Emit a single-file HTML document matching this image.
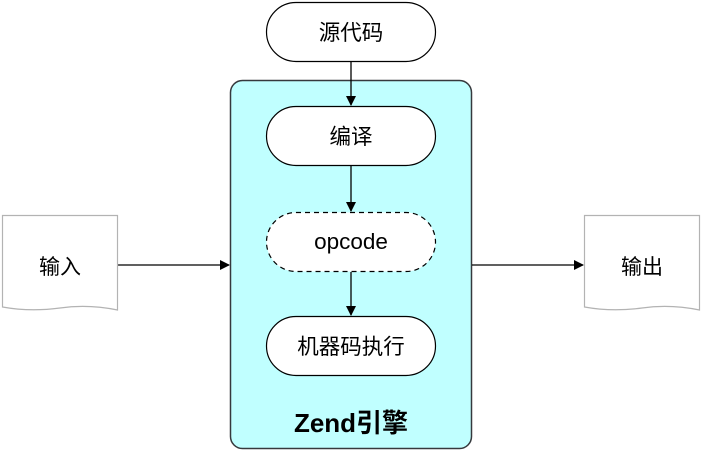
<!DOCTYPE html>
<html><head><meta charset="utf-8"><style>
html,body{margin:0;padding:0;background:#fff;}
svg{display:block;}
text{font-family:"Liberation Sans","Noto Sans CJK SC",sans-serif;fill:#000;}
</style></head><body>
<svg width="702" height="451" viewBox="0 0 702 451" xmlns="http://www.w3.org/2000/svg">
<defs>
<marker id="a" markerWidth="10" markerHeight="10" refX="9" refY="5" orient="auto" markerUnits="userSpaceOnUse">
<path d="M0,0 L10,5 L0,10 Z" fill="#000"/>
</marker>
</defs>
<rect x="230.5" y="80.5" width="241" height="368" rx="12" fill="#c0ffff" stroke="#36393d" stroke-width="1.5"/>
<rect x="266.5" y="2.5" width="169" height="59" rx="29.5" fill="#fff" stroke="#000" stroke-width="1.2"/>
<text x="351" y="40" font-size="21.5" text-anchor="middle">源代码</text>
<rect x="266.5" y="106.5" width="169" height="59" rx="29.5" fill="#fff" stroke="#000" stroke-width="1.2"/>
<text x="351" y="144" font-size="21.5" text-anchor="middle">编译</text>
<rect x="266.5" y="212.5" width="169" height="59" rx="29.5" fill="#fff" stroke="#000" stroke-width="1.2" stroke-dasharray="5,4"/>
<text x="351" y="249" font-size="22.5" text-anchor="middle">opcode</text>
<rect x="266.5" y="316.5" width="169" height="59" rx="29.5" fill="#fff" stroke="#000" stroke-width="1.2"/>
<text x="351" y="354" font-size="21.5" text-anchor="middle">机器码执行</text>
<text x="351" y="432" font-size="26" font-weight="bold" text-anchor="middle">Zend引擎</text>
<g stroke="#000" stroke-width="1.3" fill="none">
<line x1="351" y1="62" x2="351" y2="105" marker-end="url(#a)"/>
<line x1="351" y1="166" x2="351" y2="211" marker-end="url(#a)"/>
<line x1="351" y1="272" x2="351" y2="315" marker-end="url(#a)"/>
<line x1="118" y1="265" x2="229" y2="265" marker-end="url(#a)"/>
<line x1="472" y1="265" x2="583" y2="265" marker-end="url(#a)"/>
</g>
<path d="M2.5,215.5 H117.5 V310 Q88,304 60,308 Q30,312 2.5,307 Z" fill="#fff" stroke="#b3b3b3" stroke-width="1.2"/>
<text x="60" y="274" font-size="21" text-anchor="middle">输入</text>
<path d="M584.5,215.5 H699.5 V310 Q670,304 642,308 Q612,312 584.5,307 Z" fill="#fff" stroke="#b3b3b3" stroke-width="1.2"/>
<text x="642" y="274" font-size="21" text-anchor="middle">输出</text>
</svg>
</body></html>
